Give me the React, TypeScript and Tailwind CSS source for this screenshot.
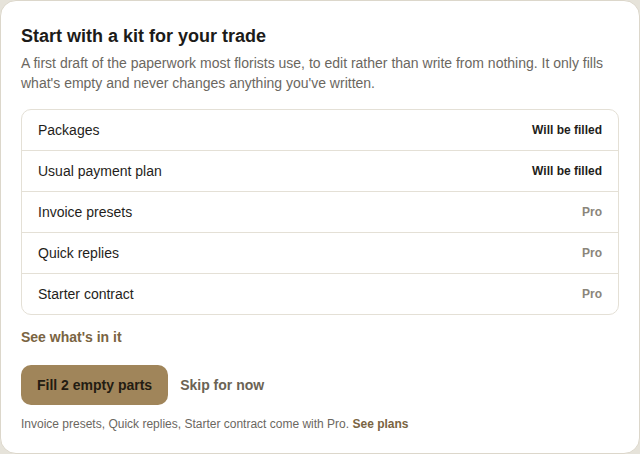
const rows = [
  { name: "Packages", status: "Will be filled", filled: true },
  { name: "Usual payment plan", status: "Will be filled", filled: true },
  { name: "Invoice presets", status: "Pro", filled: false },
  { name: "Quick replies", status: "Pro", filled: false },
  { name: "Starter contract", status: "Pro", filled: false },
];

export default function App() {
  return (
    <div className="h-[454px] w-[640px] bg-[#e6e3da] font-['Liberation_Sans',Arial,sans-serif]">
      <div className="flex h-full w-full flex-col rounded-2xl border border-[#dcd7cb] bg-white px-5 pb-5 pt-[21px]">
        <h2 className="text-lg font-bold leading-7 text-[#1c1b19]">Start with a kit for your trade</h2>
        <p className="mt-[3px] text-sm leading-5 text-[#6b675f]">
          A first draft of the paperwork most florists use, to edit rather than write from nothing. It only fills
          what's empty and never changes anything you've written.
        </p>

        <div className="mt-4 overflow-hidden rounded-[10px] border border-[#e4e0d6]">
          {rows.map((row, i) => (
            <div
              key={row.name}
              className={`flex h-10 items-center justify-between px-4 ${i < rows.length - 1 ? "h-[41px] border-b border-[#e4e0d6]" : ""}`}
            >
              <span className="text-sm text-[#1f1e1b]">{row.name}</span>
              <span className={`text-xs font-bold ${row.filled ? "text-[#1f1e1b]" : "text-[#8a857b]"}`}>
                {row.status}
              </span>
            </div>
          ))}
        </div>

        <button className="mt-3 self-start text-sm font-bold leading-5 text-[#7a6442]">See what's in it</button>

        <div className="mt-[18px] flex items-center gap-3">
          <button className="h-10 rounded-[10px] bg-[#a0855a] px-4 text-sm font-bold text-[#231c12]">
            Fill 2 empty parts
          </button>
          <button className="text-sm font-bold text-[#6b6354]">Skip for now</button>
        </div>

        <p className="mt-[11px] text-xs leading-4 text-[#6b675f]">
          Invoice presets, Quick replies, Starter contract come with Pro.{" "}
          <span className="font-bold text-[#7a6442]">See plans</span>
        </p>
      </div>
    </div>
  );
}
